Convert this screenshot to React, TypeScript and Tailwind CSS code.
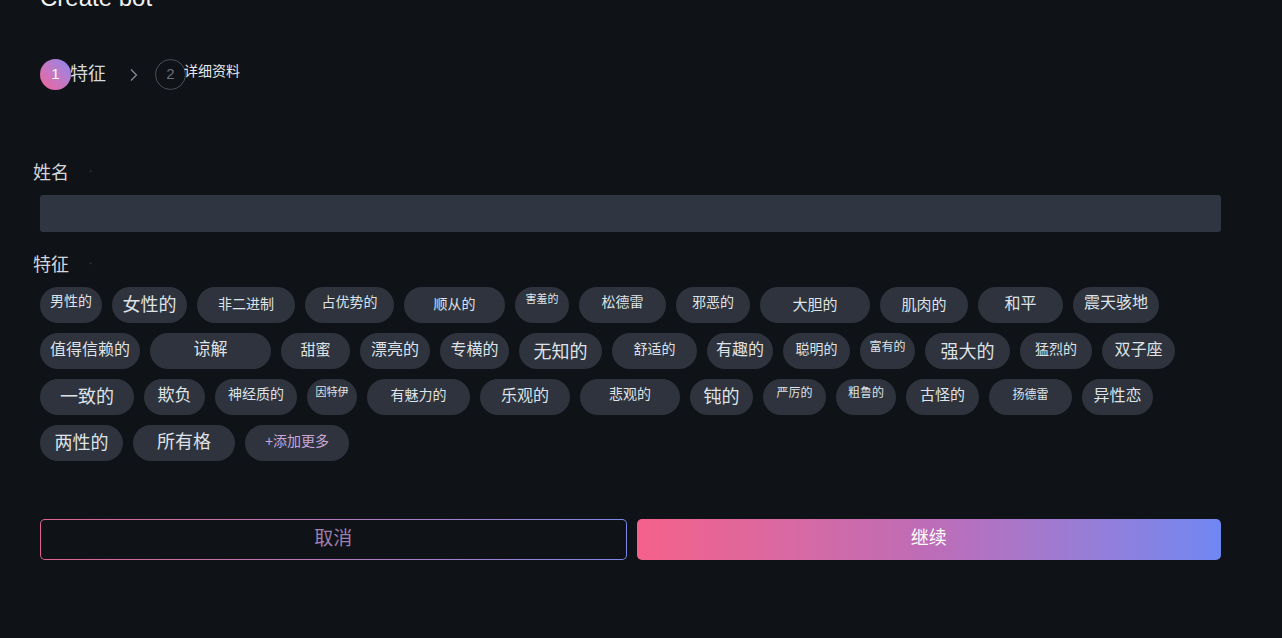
import * as React from "react";

type Trait = { label: string; w: string; text: string; shift: string };

// widths, sizes and baseline nudges are taken per chip from the design
const TRAITS: Trait[] = [
  { label: "男性的", w: "w-[62px]", text: "text-[14px]", shift: "pb-[8px]" },
  { label: "女性的", w: "w-[75px]", text: "text-[18px]", shift: "pb-0" },
  { label: "非二进制", w: "w-[98px]", text: "text-[14px]", shift: "pb-[2px]" },
  { label: "占优势的", w: "w-[89px]", text: "text-[14px]", shift: "pb-[6px]" },
  { label: "顺从的", w: "w-[101px]", text: "text-[14px]", shift: "pb-[2px]" },
  { label: "害羞的", w: "w-[54px]", text: "text-[11px]", shift: "pb-[12px]" },
  { label: "松德雷", w: "w-[87px]", text: "text-[14px]", shift: "pb-[6px]" },
  { label: "邪恶的", w: "w-[74px]", text: "text-[14px]", shift: "pb-[6px]" },
  { label: "大胆的", w: "w-[110px]", text: "text-[15px]", shift: "pb-0" },
  { label: "肌肉的", w: "w-[88px]", text: "text-[15px]", shift: "pb-0" },
  { label: "和平", w: "w-[85px]", text: "text-[16px]", shift: "pb-[2px]" },
  { label: "震天骇地", w: "w-[86px]", text: "text-[16px]", shift: "pb-[4px]" },

  { label: "值得信赖的", w: "w-[100px]", text: "text-[16px]", shift: "pb-[2px]" },
  { label: "谅解", w: "w-[121px]", text: "text-[17px]", shift: "pb-[2px]" },
  { label: "甜蜜", w: "w-[69px]", text: "text-[15px]", shift: "pb-[2px]" },
  { label: "漂亮的", w: "w-[70px]", text: "text-[16px]", shift: "pb-[2px]" },
  { label: "专横的", w: "w-[69px]", text: "text-[16px]", shift: "pb-[2px]" },
  { label: "无知的", w: "w-[83px]", text: "text-[18px]", shift: "pt-[2px]" },
  { label: "舒适的", w: "w-[85px]", text: "text-[14px]", shift: "pb-[4px]" },
  { label: "有趣的", w: "w-[66px]", text: "text-[16px]", shift: "pb-[2px]" },
  { label: "聪明的", w: "w-[67px]", text: "text-[14px]", shift: "pb-[4px]" },
  { label: "富有的", w: "w-[55px]", text: "text-[12px]", shift: "pb-[8px]" },
  { label: "强大的", w: "w-[85px]", text: "text-[18px]", shift: "pt-[2px]" },
  { label: "猛烈的", w: "w-[72px]", text: "text-[14px]", shift: "pb-[4px]" },
  { label: "双子座", w: "w-[73px]", text: "text-[16px]", shift: "pb-[2px]" },

  { label: "一致的", w: "w-[94px]", text: "text-[18px]", shift: "pb-0" },
  { label: "欺负", w: "w-[61px]", text: "text-[17px]", shift: "pb-[2px]" },
  { label: "神经质的", w: "w-[82px]", text: "text-[14px]", shift: "pb-[6px]" },
  { label: "因特伊", w: "w-[50px]", text: "text-[11px]", shift: "pb-[10px]" },
  { label: "有魅力的", w: "w-[103px]", text: "text-[14px]", shift: "pb-[4px]" },
  { label: "乐观的", w: "w-[90px]", text: "text-[16px]", shift: "pb-[2px]" },
  { label: "悲观的", w: "w-[100px]", text: "text-[14px]", shift: "pb-[6px]" },
  { label: "钝的", w: "w-[63px]", text: "text-[18px]", shift: "pb-0" },
  { label: "严厉的", w: "w-[63px]", text: "text-[12px]", shift: "pb-[8px]" },
  { label: "粗鲁的", w: "w-[60px]", text: "text-[12px]", shift: "pb-[8px]" },
  { label: "古怪的", w: "w-[73px]", text: "text-[15px]", shift: "pb-[4px]" },
  { label: "扬德雷", w: "w-[83px]", text: "text-[12px]", shift: "pb-[4px]" },
  { label: "异性恋", w: "w-[71px]", text: "text-[16px]", shift: "pb-[2px]" },

  { label: "两性的", w: "w-[83px]", text: "text-[18px]", shift: "pb-0" },
  { label: "所有格", w: "w-[102px]", text: "text-[18px]", shift: "pb-[2px]" },
];

function TraitChip({ trait }: { trait: Trait }) {
  return (
    <button
      className={`flex h-[36px] items-center justify-center rounded-full bg-[#2e333d] text-[#dfe2e6] ${trait.w} ${trait.text} ${trait.shift}`}
    >
      {trait.label}
    </button>
  );
}

function Steps() {
  return (
    <div className="flex items-center">
      <div className="flex h-[31px] w-[31px] items-center justify-center rounded-full bg-linear-to-tr from-[#f25f97] to-[#8a84ee] text-[15px] text-white">
        1
      </div>
      <span className="-ml-px text-[18px] text-[#d6d9de]">特征</span>
      <svg className="ml-[23px] h-[14px] w-[10px]" viewBox="0 0 10 14" fill="none">
        <path d="M2 1.5 7.5 7 2 12.5" stroke="#8a8f98" strokeWidth="1.2" />
      </svg>
      <div className="ml-[16px] flex h-[31px] w-[31px] items-center justify-center rounded-full border border-[#4a4f57] text-[15px] text-[#6b7079]">
        2
      </div>
      <span className="-ml-[2px] mb-[6px] text-[14px] text-[#e6e8eb]">详细资料</span>
    </div>
  );
}

function FieldLabel({ children }: { children: React.ReactNode }) {
  return (
    <div className="-ml-[7px] flex items-center text-[18px] leading-[26px] text-[#d3d6db]">
      {children}
      <span className="ml-[20px] text-[8px] text-[#30353d]">*</span>
    </div>
  );
}

export default function App() {
  return (
    <div
      className="h-[638px] w-full overflow-hidden bg-[#0f1216] px-[40px]"
      style={{ fontFamily: '"Liberation Sans", "Noto Sans CJK SC", sans-serif' }}
    >
      <div className="w-[1181px]">
        <h1 className="-mt-[18px] text-[24px] leading-[32px] text-[#f1f2f4]">Create bot</h1>

        <div className="mt-[45px]">
          <Steps />
        </div>

        <div className="mt-[70px]">
          <FieldLabel>姓名</FieldLabel>
        </div>
        <input className="mt-[9px] block h-[37px] w-full rounded-[3px] bg-[#2f3541] px-3 text-[#e5e7eb] outline-none" />

        <div className="mt-[20px]">
          <FieldLabel>特征</FieldLabel>
        </div>
        <div className="mt-[9px] flex flex-wrap gap-[10px]">
          {TRAITS.map((t) => (
            <TraitChip key={t.label} trait={t} />
          ))}
          <button className="flex h-[36px] w-[104px] items-center justify-center rounded-full bg-[#2e333d] pb-[4px] text-[14px] text-[#c8a6d8]">
            +添加更多
          </button>
        </div>

        <div className="mt-[58px] flex gap-[10px]">
          <div className="flex-1 rounded-[5px] bg-linear-to-r from-[#e0628f] to-[#7e86e6] p-px">
            <button className="flex h-[39px] w-full items-center justify-center rounded-[4px] bg-[#0f1216] text-[19px] text-[#9f7fae]">
              取消
            </button>
          </div>
          <button className="flex h-[41px] flex-1 items-center justify-center rounded-[5px] bg-linear-to-r from-[#f5618a] via-[#bd6cb7] to-[#6f87f2] pb-[2px] text-[18px] text-white">
            继续
          </button>
        </div>
      </div>
    </div>
  );
}
